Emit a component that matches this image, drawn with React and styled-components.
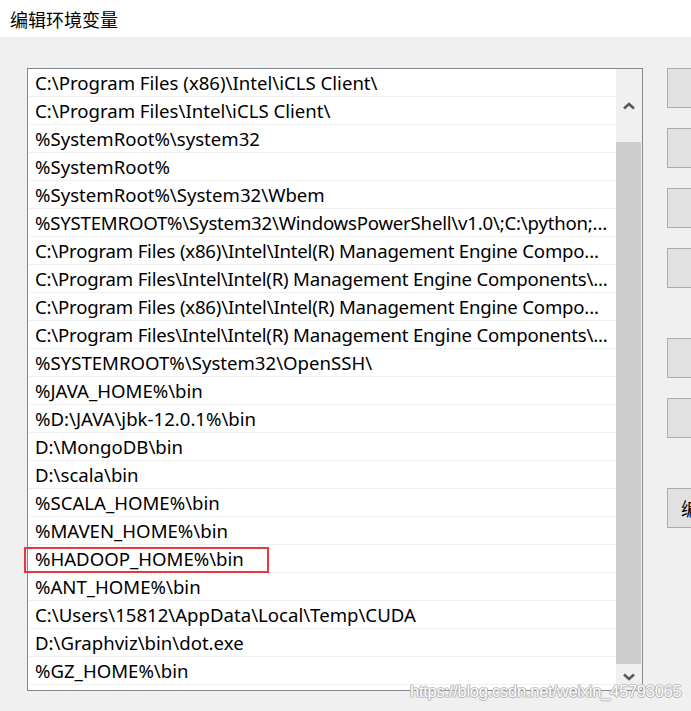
import React from "react";
import styled, { createGlobalStyle } from "styled-components";

const GlobalStyle = createGlobalStyle`
    html, body {
        margin: 0;
        padding: 0;
        background: #f0f0f0;
        overflow: hidden;
    }
    body {
        font-family: "Noto Sans", "Noto Sans CJK SC", sans-serif;
    }
`;

const Page = styled.div`
    position: relative;
    width: 691px;
    height: 711px;
    background: #f0f0f0;
    overflow: hidden;
`;

const TitleBar = styled.div`
    height: 37px;
    background: #ffffff;
    display: flex;
    align-items: center;
    padding-left: 10px;
    font-family: "Noto Sans CJK SC", sans-serif;
    font-size: 18px;
    color: #000;
`;

const Body = styled.div`
    display: flex;
    align-items: flex-start;
    padding: 31px 0 0 27px;
    gap: 24px;
`;

const ListBox = styled.div`
    position: relative;
    width: 614px;
    height: 621px;
    border: 1px solid #828790;
    background: #ffffff;
    display: flex;
`;

const Rows = styled.ul`
    list-style: none;
    margin: 0;
    padding: 0;
    width: 588px;
`;

const Row = styled.li`
    height: 27px;
    border-bottom: 1px solid #f0f0f0;
    padding: 0 0 0 7px;
    font-family: "Noto Sans", "Noto Sans CJK SC", sans-serif;
    font-size: 18.6px;
    line-height: 28px;
    letter-spacing: ${(p) => (p.$tight ? "-0.2px" : "0")};
    color: #000;
    white-space: nowrap;
    overflow: hidden;
`;

const ScrollBar = styled.div`
    width: 26px;
    background: #f0f0f0;
    display: flex;
    flex-direction: column;
`;

const Arrow = styled.div`
    height: ${(p) => p.$h}px;
    width: 25px;
    display: flex;
    align-items: center;
    justify-content: center;
`;

const Thumb = styled.div`
    flex: 1;
    width: 25px;
    background: #cdcdcd;
`;

const Highlight = styled.div`
    position: absolute;
    left: -4px;
    top: 478px;
    width: 241px;
    height: 22px;
    border: 2px solid #e8383d;
`;

const Buttons = styled.div`
    display: flex;
    flex-direction: column;
`;

const Button = styled.div`
    width: 60px;
    height: 38px;
    margin-top: ${(p) => p.$gap}px;
    border: 1px solid #adadad;
    background: #e1e1e1;
    font-family: "Noto Sans CJK SC", sans-serif;
    font-size: 18px;
    line-height: 38px;
    padding-left: 13px;
    color: #000;
`;

const Watermark = styled.div`
    position: absolute;
    left: 410px;
    top: 682px;
    font-family: "Liberation Sans", Arial, sans-serif;
    font-size: 16.5px;
    color: #fbfbfb;
    text-shadow: 1px 0 0 #b4b4b4, -1px 0 0 #b4b4b4, 0 1px 0 #b4b4b4, 0 -1px 0 #c4c4c4;
    letter-spacing: -0.25px;
`;

// truncated entries are shown as the list control draws them
const paths = [
    "C:\\Program Files (x86)\\Intel\\iCLS Client\\",
    "C:\\Program Files\\Intel\\iCLS Client\\",
    "%SystemRoot%\\system32",
    "%SystemRoot%",
    "%SystemRoot%\\System32\\Wbem",
    "%SYSTEMROOT%\\System32\\WindowsPowerShell\\v1.0\\;C:\\python;...",
    "C:\\Program Files (x86)\\Intel\\Intel(R) Management Engine Compo...",
    "C:\\Program Files\\Intel\\Intel(R) Management Engine Components\\...",
    "C:\\Program Files (x86)\\Intel\\Intel(R) Management Engine Compo...",
    "C:\\Program Files\\Intel\\Intel(R) Management Engine Components\\...",
    "%SYSTEMROOT%\\System32\\OpenSSH\\",
    "%JAVA_HOME%\\bin",
    "%D:\\JAVA\\jbk-12.0.1%\\bin",
    "D:\\MongoDB\\bin",
    "D:\\scala\\bin",
    "%SCALA_HOME%\\bin",
    "%MAVEN_HOME%\\bin",
    "%HADOOP_HOME%\\bin",
    "%ANT_HOME%\\bin",
    "C:\\Users\\15812\\AppData\\Local\\Temp\\CUDA",
    "D:\\Graphviz\\bin\\dot.exe",
    "%GZ_HOME%\\bin",
];

const gaps = [0, 20, 20, 20, 50, 20, 50];

function Chevron({ down }) {
    return (
        <svg width="12" height="8" viewBox="0 0 12 8">
            <path
                d={down ? "M1 1.5 L6 6 L11 1.5" : "M1 6.5 L6 2 L11 6.5"}
                fill="none"
                stroke="#5a5a5a"
                strokeWidth="2.6"
            />
        </svg>
    );
}

export default function App() {
    return (
        <Page>
            <GlobalStyle />
            <TitleBar>编辑环境变量</TitleBar>
            <Body>
                <ListBox>
                    <Rows>
                        {paths.map((p, i) => (
                            <Row key={i} $tight={p.endsWith("...")}>
                                {p}
                            </Row>
                        ))}
                    </Rows>
                    <ScrollBar>
                        <Arrow $h={73}>
                            <Chevron />
                        </Arrow>
                        <Thumb />
                        <Arrow $h={26}>
                            <Chevron down />
                        </Arrow>
                    </ScrollBar>
                    <Highlight />
                </ListBox>
                <Buttons>
                    {gaps.map((g, i) => (
                        <Button key={i} $gap={g}>
                            {i === gaps.length - 1 ? "编" : ""}
                        </Button>
                    ))}
                </Buttons>
            </Body>
            <Watermark>https://blog.csdn.net/weixin_45793065</Watermark>
        </Page>
    );
}
